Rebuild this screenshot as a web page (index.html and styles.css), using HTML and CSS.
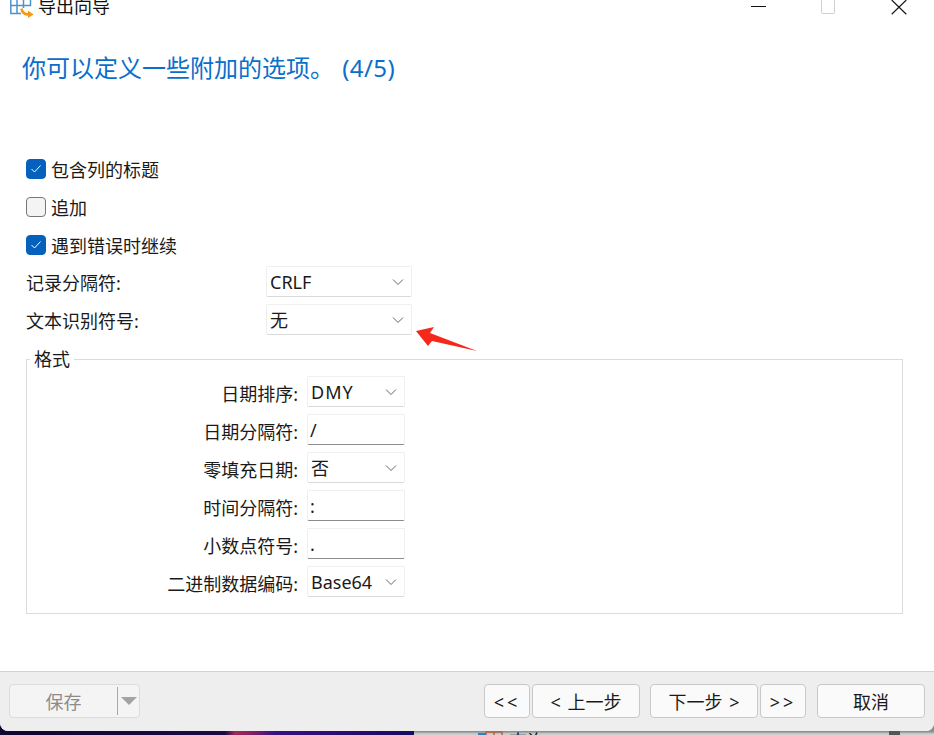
FILE: index.html
```html
<!DOCTYPE html>
<html lang="zh">
<head>
<meta charset="utf-8">
<title>导出向导</title>
<link rel="stylesheet" href="styles.css">
</head>
<body>
<div class="desktop">
  <div class="strip strip-dark"></div>
  <div class="strip strip-grey">
    <svg class="tree-icon" width="26" height="8" viewBox="0 0 26 8"><path d="M0 3H8" stroke="#2f7fc4" stroke-width="2"/><path d="M8 7V1H24V7M16 1V7" fill="none" stroke="#b5604a" stroke-width="1.500"/></svg>
    <span class="tree-text">查询</span>
    <span class="scroll-thumb"></span>
  </div>
</div>
<main class="window">
  <header class="titlebar">
    <svg class="app-icon" width="24" height="20" viewBox="0 0 24 20">
      <path d="M.8 0V13.500H11M.8 5.500H20.500V0M.8 13.500H11M7 0V13.500M13.500 0V8" fill="none" stroke="#4b93cf" stroke-width="1.500"/>
      <path d="M11.500 8.500C12 12.500 15 14.500 18.500 14.500" fill="none" stroke="#f39a12" stroke-width="2.500"/>
      <path d="M18 10.500L23.500 14.500L18 18Z" fill="#f39a12"/>
    </svg>
    <span class="title-text">导出向导</span>
    <div class="window-controls">
      <span class="ctl ctl-min"></span>
      <span class="ctl ctl-max"></span>
      <svg class="ctl-close" width="16" height="16" viewBox="0 0 16 16"><path d="M.7 0L15.300 14.300M15.300 0L.7 14.300" stroke="#1a1a1a" stroke-width="1.200" fill="none"/></svg>
    </div>
  </header>
  <h1 class="heading">你可以定义一些附加的选项。 <span class="step">(4/5)</span></h1>
  <section class="options">
    <label class="check-row"><span class="box checked"><svg width="12" height="10" viewBox="0 0 12 10"><path d="M1.500 5L4.500 8L10.500 1.500" fill="none" stroke="#fff" stroke-width="1"/></svg></span><span class="check-text">包含列的标题</span></label>
    <label class="check-row"><span class="box"></span><span class="check-text">追加</span></label>
    <label class="check-row"><span class="box checked"><svg width="12" height="10" viewBox="0 0 12 10"><path d="M1.500 5L4.500 8L10.500 1.500" fill="none" stroke="#fff" stroke-width="1"/></svg></span><span class="check-text">遇到错误时继续</span></label>
    <div class="field-row"><span class="field-label">记录分隔符:</span><div class="control wide"><span>CRLF</span><svg class="chev" width="12" height="8" viewBox="0 0 12 8"><path d="M1 1.500L6 6.500L11 1.500" fill="none" stroke="#666" stroke-width="1"/></svg></div></div>
    <div class="field-row"><span class="field-label">文本识别符号:</span><div class="control wide"><span>无</span><svg class="chev" width="12" height="8" viewBox="0 0 12 8"><path d="M1 1.500L6 6.500L11 1.500" fill="none" stroke="#666" stroke-width="1"/></svg></div></div>
  </section>
  <fieldset class="format">
    <legend>格式</legend>
    <div class="format-row"><span class="format-label">日期排序:</span><div class="control narrow"><span class="spaced">DMY</span><svg class="chev" width="12" height="8" viewBox="0 0 12 8"><path d="M1 1.500L6 6.500L11 1.500" fill="none" stroke="#666" stroke-width="1"/></svg></div></div>
    <div class="format-row"><span class="format-label">日期分隔符:</span><div class="control narrow input"><span>/</span></div></div>
    <div class="format-row"><span class="format-label">零填充日期:</span><div class="control narrow"><span>否</span><svg class="chev" width="12" height="8" viewBox="0 0 12 8"><path d="M1 1.500L6 6.500L11 1.500" fill="none" stroke="#666" stroke-width="1"/></svg></div></div>
    <div class="format-row"><span class="format-label">时间分隔符:</span><div class="control narrow input"><span>:</span></div></div>
    <div class="format-row"><span class="format-label">小数点符号:</span><div class="control narrow input"><span>.</span></div></div>
    <div class="format-row"><span class="format-label">二进制数据编码:</span><div class="control narrow"><span>Base64</span><svg class="chev" width="12" height="8" viewBox="0 0 12 8"><path d="M1 1.500L6 6.500L11 1.500" fill="none" stroke="#666" stroke-width="1"/></svg></div></div>
  </fieldset>
  <footer class="footer">
    <div class="split-btn">
      <span class="split-main">保存</span>
      <span class="split-sep"></span>
      <span class="split-arrow"></span>
    </div>
    <div class="nav-btns">
      <div class="btn-group">
        <button class="btn small">&lt;&lt;</button>
        <button class="btn">&lt; 上一步</button>
      </div>
      <div class="btn-group">
        <button class="btn">下一步 &gt;</button>
        <button class="btn small">&gt;&gt;</button>
      </div>
      <button class="btn">取消</button>
    </div>
  </footer>
</main>
<svg class="annotation" width="66" height="30" viewBox="0 0 66 30"><path d="M1 6L19 2L15 8L62 26L17 16L13 21Z" fill="#f5281c"/></svg>
</body>
</html>
```
FILE: styles.css
```css
* { box-sizing: border-box; }
html, body { margin: 0; height: 735px; overflow: hidden; }
body {
  position: relative;
  width: 934px;
  font-family: "Noto Sans", "Noto Sans CJK SC", sans-serif;
  font-size: 18px;
  line-height: 24px;
  color: #1a1a1a;
  background: #fff;
}
.desktop { position: absolute; left: 0; right: 0; bottom: 0; height: 12px; display: flex; }
.strip { height: 100%; }
.strip-dark { width: 414px; background: linear-gradient(90deg, #12052e 0, #1d0a45 225px, #a02a55 235px, #8a2060 250px, #3a1080 275px, #1a0a60 100%); }
.strip-grey {
  flex: 1;
  position: relative;
  overflow: hidden;
  background: linear-gradient(180deg, #8f8f8f 0, #8f8f8f 9px, #bdbdbd 10px, #d5d5d5 12px);
}
.tree-icon { position: absolute; left: 64px; top: 8px; }
.tree-text { position: absolute; left: 95px; top: 6px; color: #111; line-height: 24px; }
.scroll-thumb { position: absolute; left: 475px; top: 7px; width: 11px; height: 5px; background: #555; }
.window {
  position: absolute;
  left: 0; top: 0;
  width: 934px;
  height: 731px;
  background: #fff;
  border-bottom-left-radius: 8px;
  border-bottom-right-radius: 8px;
  overflow: hidden;
  display: flex;
  flex-direction: column;
}
.titlebar { height: 19px; display: flex; align-items: flex-start; padding-left: 10px; position: relative; }
.app-icon { flex: none; }
.title-text { font-size: 18px; line-height: 24px; margin-top: -6px; margin-left: 4px; color: #111; }
.window-controls { margin-left: auto; display: flex; align-items: flex-start; }
.ctl { display: block; }
.ctl-min { width: 15px; height: 1px; background: #111; margin-top: 6px; margin-right: 55px; }
.ctl-max { width: 14px; height: 14px; border: 1.500px solid #d0d0d0; border-top: 0; border-radius: 0 0 2px 2px; margin-right: 56px; }
.ctl-close { margin-right: 27px; }
.heading {
  margin: 31px 0 0 22px;
  font-size: 24px;
  font-weight: 400;
  line-height: 36px;
  color: #0a6ecb;
  word-spacing: 2px;
}
.step { letter-spacing: .4px; }
.options { margin: 67px 0 0 26px; display: flex; flex-direction: column; gap: 6px; }
.check-row { display: flex; align-items: center; height: 32px; font-size: 18px; }
.check-text { padding-top: 2px; }
.box {
  width: 20px; height: 20px;
  margin-right: 5px;
  border: 1px solid #777;
  border-radius: 4px;
  background: #f4f4f4;
  display: flex; align-items: center; justify-content: center;
}
.box.checked { background: #0561bb; border-color: #0561bb; }
.field-row { display: flex; align-items: center; height: 32px; }
.field-label { width: 240px; }
.field-row .control { align-self: flex-start; margin-top: -1px; }
.control {
  height: 31px;
  background: #fff;
  border: 1px solid #efefef;
  border-bottom: 1px solid #d9d9d9;
  border-radius: 2px;
  display: flex;
  align-items: center;
  padding-left: 3px;
}
.control .spaced { letter-spacing: 1px; }
.control.wide { width: 146px; }
.control.narrow { width: 98px; }
.control.input { border-bottom: 1px solid #8c8c8c; padding-left: 2px; }
.chev { margin-left: auto; margin-right: 7px; }
.format {
  margin: 12px 31px 0 26px;
  padding: 7px 0 0 0;
  height: 265px;
  border: 1px solid #dcdcdc;
  min-width: 0;
}
.format legend { margin-left: 3px; padding: 0 4px; font-size: 18px; line-height: 20px; }
.format-row { display: flex; align-items: center; height: 31px; margin-bottom: 7px; }
.format-label { width: 271px; text-align: right; margin-right: 9px; padding-top: 4px; }
.footer {
  margin-top: auto;
  height: 60px;
  background: #eee;
  border-top: 1px solid #d2d2d2;
  display: flex;
  align-items: flex-start;
  padding: 12px 9px 0 9px;
  justify-content: space-between;
  border-radius: 0 0 8px 8px;
}
.split-btn {
  width: 131px; height: 34px;
  border: 1px solid #dcdcdc;
  border-radius: 4px;
  background: #f4f4f4;
  display: flex;
  align-items: center;
  color: #8c8c8c;
}
.split-main { width: 107px; text-align: center; padding-top: 2px; }
.split-sep { width: 1px; height: 28px; background: #a8a8a8; }
.split-arrow { width: 0; height: 0; margin-left: 3px; border-left: 8px solid transparent; border-right: 8px solid transparent; border-top: 8px solid #a3a3a3; }
.nav-btns { display: flex; gap: 10px; }
.nav-btns > .btn { margin-left: 1px; }
.btn-group { display: flex; gap: 2px; }
.btn {
  width: 108px; height: 34px;
  padding: 2px 0 0;
  border: 1px solid #c8c8c8;
  border-radius: 4px;
  background: #fafafa;
  font: inherit;
  color: #1a1a1a;
  word-spacing: 2px;
}
.btn.small { width: 46px; letter-spacing: 3px; }
.annotation { position: absolute; left: 415px; top: 325px; }
```
